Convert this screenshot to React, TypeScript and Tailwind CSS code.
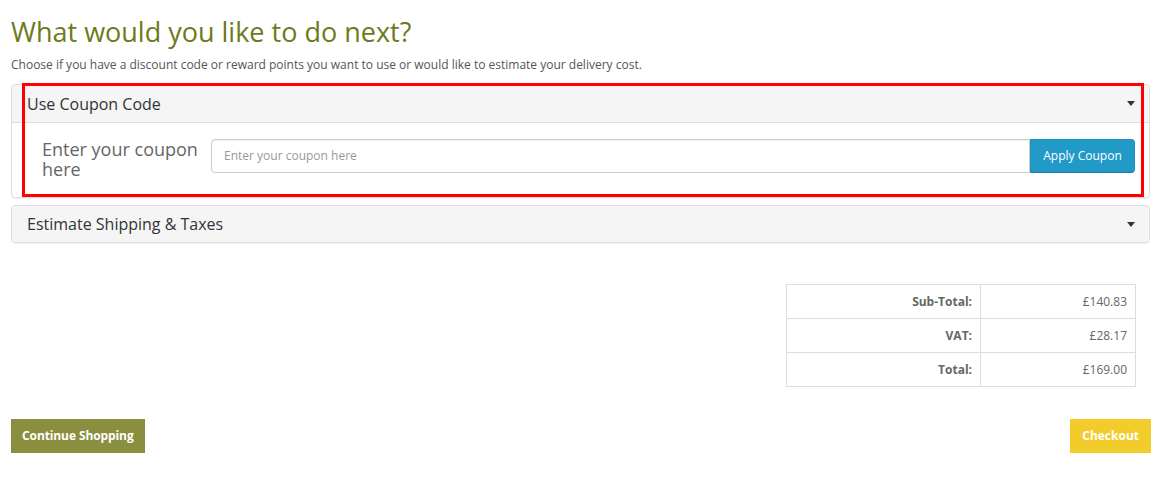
import React from 'react';

const Caret: React.FC = () => (
    <span className="inline-block w-0 h-0 border-l-[4px] border-r-[4px] border-t-[5px] border-l-transparent border-r-transparent border-t-[#333]" />
);

const totals = [
    { label: 'Sub-Total:', value: '£140.83' },
    { label: 'VAT:', value: '£28.17' },
    { label: 'Total:', value: '£169.00' },
];

const App: React.FC = () => {
    return (
        <div className="w-[1161px] h-[490px] bg-white px-[11px] pt-[14px] relative" style={{ fontFamily: '"Open Sans", sans-serif' }}>
            <h1 className="text-[27px] leading-[36px] text-[#6e7a1c] font-normal">What would you like to do next?</h1>
            <p className="text-[12px] leading-[18px] text-[#555] mt-[6px]">Choose if you have a discount code or reward points you want to use or would like to estimate your delivery cost.</p>

            <div className="mt-[10px] border border-[#ddd] rounded-[4px] shadow-[0_1px_1px_rgba(0,0,0,0.05)] relative">
                <div className="h-[38px] bg-[#f5f5f5] border-b border-[#ddd] flex items-center justify-between pl-[15px] pr-[14px] rounded-t-[4px]">
                    <span className="text-[16px] text-[#333]">Use Coupon Code</span>
                    <Caret />
                </div>
                <div className="flex items-start pt-[16px] pb-[14px] pr-[14px] h-[74px]">
                    <label className="w-[199px] pl-[30px] text-[18px] leading-[20px] text-[#666]">Enter your coupon here</label>
                    <div className="flex flex-1 h-[34px]">
                        <input type="text" placeholder="Enter your coupon here" className="flex-1 border border-[#ccc] rounded-l-[4px] px-[12px] text-[12px] text-[#555] placeholder:text-[#999] shadow-[inset_0_1px_1px_rgba(0,0,0,0.075)] outline-none" />
                        <button className="w-[105px] bg-[#229ac8] border border-[#1f90bb] border-b-[#1a7aa0] rounded-r-[4px] text-white text-[12px]">Apply Coupon</button>
                    </div>
                </div>
                <div className="absolute left-[10px] top-[-2px] w-[1122px] h-[114px] border-[3px] border-[#ff0000] pointer-events-none" />
            </div>

            <div className="mt-[7px] border border-[#ddd] rounded-[4px] shadow-[0_1px_1px_rgba(0,0,0,0.05)]">
                <div className="h-[36px] bg-[#f5f5f5] flex items-center justify-between pl-[15px] pr-[14px] rounded-[4px]">
                    <span className="text-[16px] text-[#333]">Estimate Shipping &amp; Taxes</span>
                    <Caret />
                </div>
            </div>

            <div className="flex justify-end mt-[41px] pr-[14px]">
                <table className="w-[350px] border-collapse text-[12px] text-[#666]">
                    <tbody>
                        {totals.map((row) => (
                            <tr key={row.label} className="h-[34px]">
                                <td className="w-[194px] border border-[#ddd] px-[8px] text-right font-bold">{row.label}</td>
                                <td className="border border-[#ddd] px-[8px] text-right">{row.value}</td>
                            </tr>
                        ))}
                    </tbody>
                </table>
            </div>

            <div className="flex justify-between mt-[32px] mr-[-1px]">
                <button className="h-[34px] px-[11px] bg-[#898f3e] text-white text-[12px] font-bold tracking-[-0.1px]">Continue Shopping</button>
                <button className="h-[34px] px-[12px] bg-[#f2cc2a] text-white text-[12px] font-bold">Checkout</button>
            </div>
        </div>
    );
};

export default App;
